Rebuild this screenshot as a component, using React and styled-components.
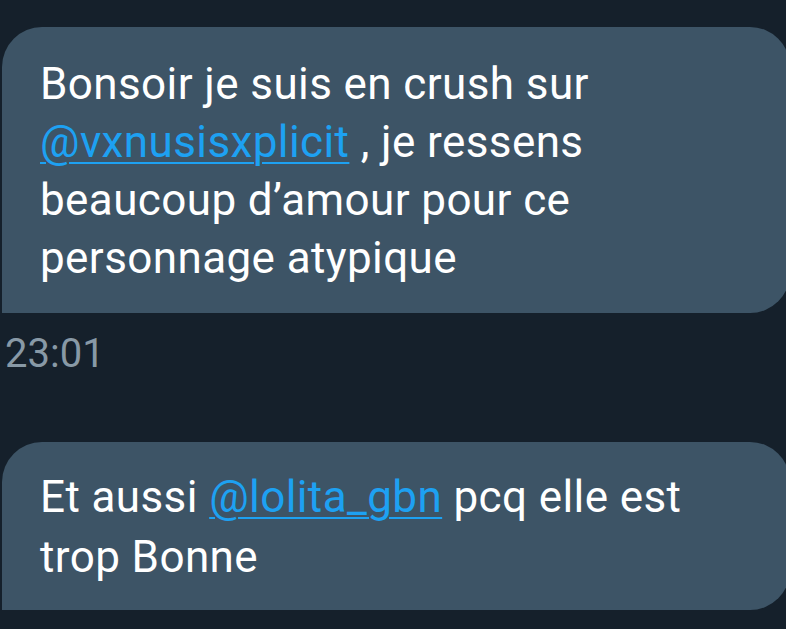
import React from "react";
import styled, { createGlobalStyle } from "styled-components";

const GlobalStyle = createGlobalStyle`
	html, body {
		margin: 0;
		padding: 0;
		background: #15202b;
		overflow: hidden;
	}
	body {
		font-family: Roboto, "Liberation Sans", sans-serif;
	}
`;

const Thread = styled.div`
	display: flex;
	flex-direction: column;
	align-items: flex-start;
	padding-top: 27px;
	padding-left: 2px;
	margin-right: -4px;
`;

const Bubble = styled.div`
	box-sizing: border-box;
	width: 100%;
	background: #3d5466;
	color: #ffffff;
	font-size: 44px;
	letter-spacing: 0.4px;
	line-height: ${p => p.$lineHeight}px;
	padding: ${p => p.$padTop}px 60px ${p => p.$padBottom}px 38px;
	border-radius: 40px 40px 40px 0;
	margin-top: ${p => p.$gap || 0}px;
`;

const Mention = styled.a`
	color: #1da1f2;
	text-decoration: underline;
	text-decoration-thickness: 2px;
	text-underline-offset: 5px;
`;

const Time = styled.div`
	margin-top: 17px;
	padding-left: 3px;
	color: #8899a6;
	font-size: 40px;
`;

const messages = [
	{
		id: 1,
		padTop: 28,
		padBottom: 26,
		lineHeight: 58,
		body: (
			<>
				Bonsoir je suis en crush sur <Mention>@vxnusisxplicit</Mention> , je
				ressens beaucoup d’amour pour ce personnage atypique
			</>
		),
		time: "23:01"
	},
	{
		id: 2,
		gap: 65,
		padTop: 25,
		padBottom: 23,
		lineHeight: 60,
		body: (
			<>
				Et aussi <Mention>@lolita_gbn</Mention> pcq elle est trop Bonne
			</>
		)
	}
];

export default function App() {
	return (
		<>
			<GlobalStyle />
			<Thread>
				{messages.map(msg => (
					<React.Fragment key={msg.id}>
						<Bubble
							$gap={msg.gap}
							$padTop={msg.padTop}
							$padBottom={msg.padBottom}
							$lineHeight={msg.lineHeight}
						>
							{msg.body}
						</Bubble>
						{msg.time && <Time>{msg.time}</Time>}
					</React.Fragment>
				))}
			</Thread>
		</>
	);
}
